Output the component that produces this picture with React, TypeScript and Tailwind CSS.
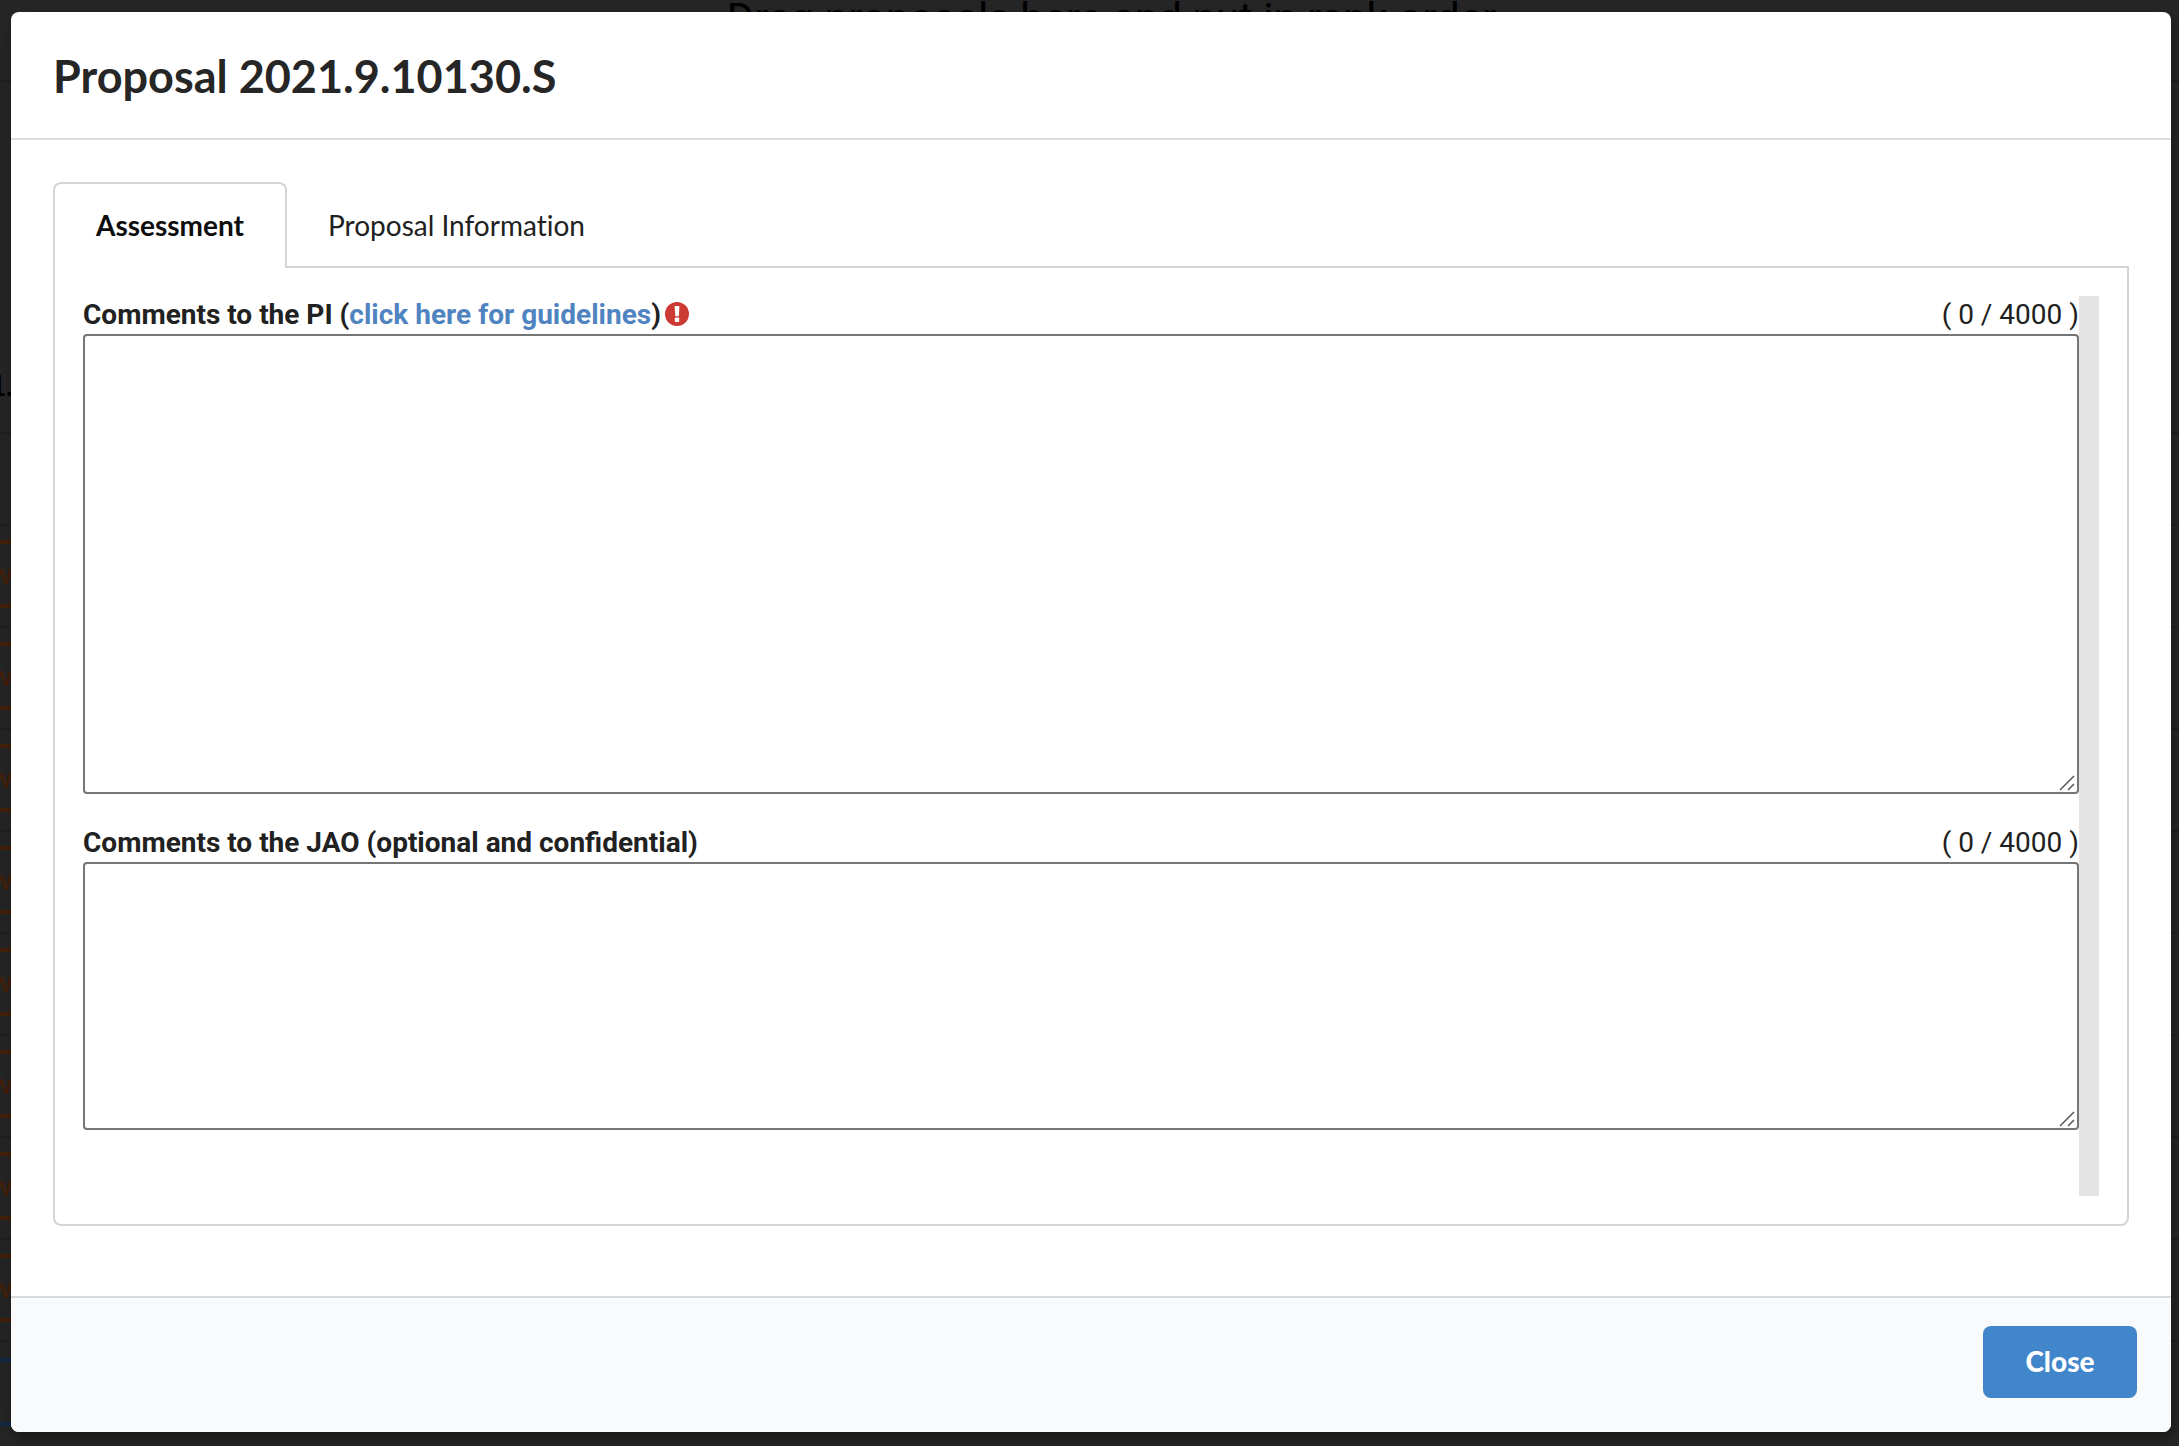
import { useState } from "react";

const rows = [0, 1, 2, 3, 4, 5, 6, 7];

type CommentFieldProps = {
  id: string;
  label: React.ReactNode;
  className: string;
};

function CommentField({ id, label, className }: CommentFieldProps) {
  const [text, setText] = useState("");

  return (
    <div className="relative">
      <div className="flex items-center justify-between h-[38px] text-[28px] leading-[38px]">
        <label htmlFor={id} className="flex items-center font-bold">
          {label}
        </label>
        <span>( {text.length} / 4000 )</span>
      </div>
      <textarea
        id={id}
        maxLength={4000}
        value={text}
        onChange={(e) => setText(e.target.value)}
        className={`block w-full resize-none rounded-[4px] border-2 border-[#767676] bg-white p-1 ${className}`}
      />
      <svg className="pointer-events-none absolute right-1 bottom-[3px] size-4" viewBox="0 0 16 16" fill="none" stroke="#555" strokeWidth="1.5">
        <path d="M1 15 15 1M9 15l6-6" />
      </svg>
    </div>
  );
}

// The proposal list that stays behind the dialog
function DimmedPage() {
  return (
    <div aria-hidden="true" className="absolute inset-0 overflow-hidden">
      <p className="-mt-2 h-[90px] border-b-2 border-[#202020] pl-11 text-center text-[42px] leading-[54px] text-black">
        Drag proposals here and put in rank order
      </p>
      <div className="flex h-[352px] items-end border-b-2 border-[#202020] pb-6 font-[Lato,sans-serif] text-[28px] leading-[46px] font-bold text-black">
        <span className="-ml-2.5">1.</span>
      </div>
      <div className="h-[92px] border-b-2 border-[#202020]" />
      {rows.map((row) => (
        <div key={row} className="h-[102px] border-b-2 border-[#202020] pt-[14px]">
          <div className="h-[68px] w-20 border-y-4 border-[#45210b] font-[Lato,sans-serif] text-[28px] leading-[58px] font-bold text-[#45210b]">
            <span className="block -ml-2.5">w</span>
          </div>
        </div>
      ))}
      <div className="pt-4">
        <div className="h-[68px] w-20 border-y-4 border-[#122a47]" />
      </div>
    </div>
  );
}

export default function App() {
  const [tab, setTab] = useState("assessment");

  return (
    <div className="relative min-h-screen bg-[#272727] pt-3 pr-2 pb-[14px] pl-[11px] font-[Roboto,sans-serif] text-[#212121]">
      <DimmedPage />
      <div
        role="dialog"
        aria-labelledby="title"
        className="relative rounded-lg bg-white shadow-[2px_6px_6px_0_rgba(0,0,0,0.2),2px_6px_30px_4px_rgba(0,0,0,0.2)]"
      >
        <header className="border-b-2 border-[#dcdcdc] px-[42px] pt-[34px] pb-8">
          <h2 id="title" className="font-[Lato,sans-serif] text-[45px] leading-[60px] font-bold text-[#262626]">
            Proposal 2021.9.10130.S
          </h2>
        </header>

        <main className="px-[42px] pt-[42px] pb-[70px]">
          <div
            role="tablist"
            className="relative z-10 -mb-0.5 flex font-[Lato,sans-serif] text-[28px] leading-[34px] [font-variant-ligatures:no-common-ligatures]"
          >
            <button
              role="tab"
              aria-selected={tab === "assessment"}
              onClick={() => setTab("assessment")}
              className="h-[86px] rounded-t-lg border-2 border-b-0 border-[#d4d4d5] bg-white px-[41px] pb-0.5 font-bold text-[#0d0d0d]"
            >
              Assessment
            </button>
            <button
              role="tab"
              aria-selected={tab === "information"}
              onClick={() => setTab("information")}
              className="h-[84px] px-[41px] pt-0.5"
            >
              Proposal Information
            </button>
          </div>

          <section className="rounded-b-lg border-2 border-[#d4d4d5] p-7">
            <div className="flex h-[900px]">
              <div className="flex grow flex-col gap-[30px]">
                <CommentField
                  id="pi"
                  className="h-[460px]"
                  label={
                    <>
                      Comments to the PI (
                      <a href="#" className="text-[#5084c1]">
                        click here for guidelines
                      </a>
                      )
                      <svg className="mb-0.5 ml-1 size-6" viewBox="0 0 24 24">
                        <circle cx="12" cy="12" r="12" fill="#cb3a33" />
                        <path d="M9.6 4.6q0-.6.6-.6h3.6q.6 0 .6.6l-.5 9q0 .6-.6.6h-2.4q-.6 0-.6-.6z" fill="#fff" />
                        <rect x="9.8" y="15.6" width="4.4" height="4.4" rx="1" fill="#fff" />
                      </svg>
                    </>
                  }
                />
                <CommentField id="jao" className="h-[268px]" label="Comments to the JAO (optional and confidential)" />
              </div>
              <div className="w-5 bg-[#e4e4e4]" />
            </div>
          </section>
        </main>

        <footer className="flex justify-end rounded-b-lg border-t-2 border-[#d9dadb] bg-[#f9fafc] pt-7 pr-[34px] pb-[34px]">
          <button className="h-[72px] w-[154px] rounded-lg bg-[#4186cb] pb-0.5 font-[Lato,sans-serif] text-[28px] leading-7 font-black text-white">
            Close
          </button>
        </footer>
      </div>
    </div>
  );
}
